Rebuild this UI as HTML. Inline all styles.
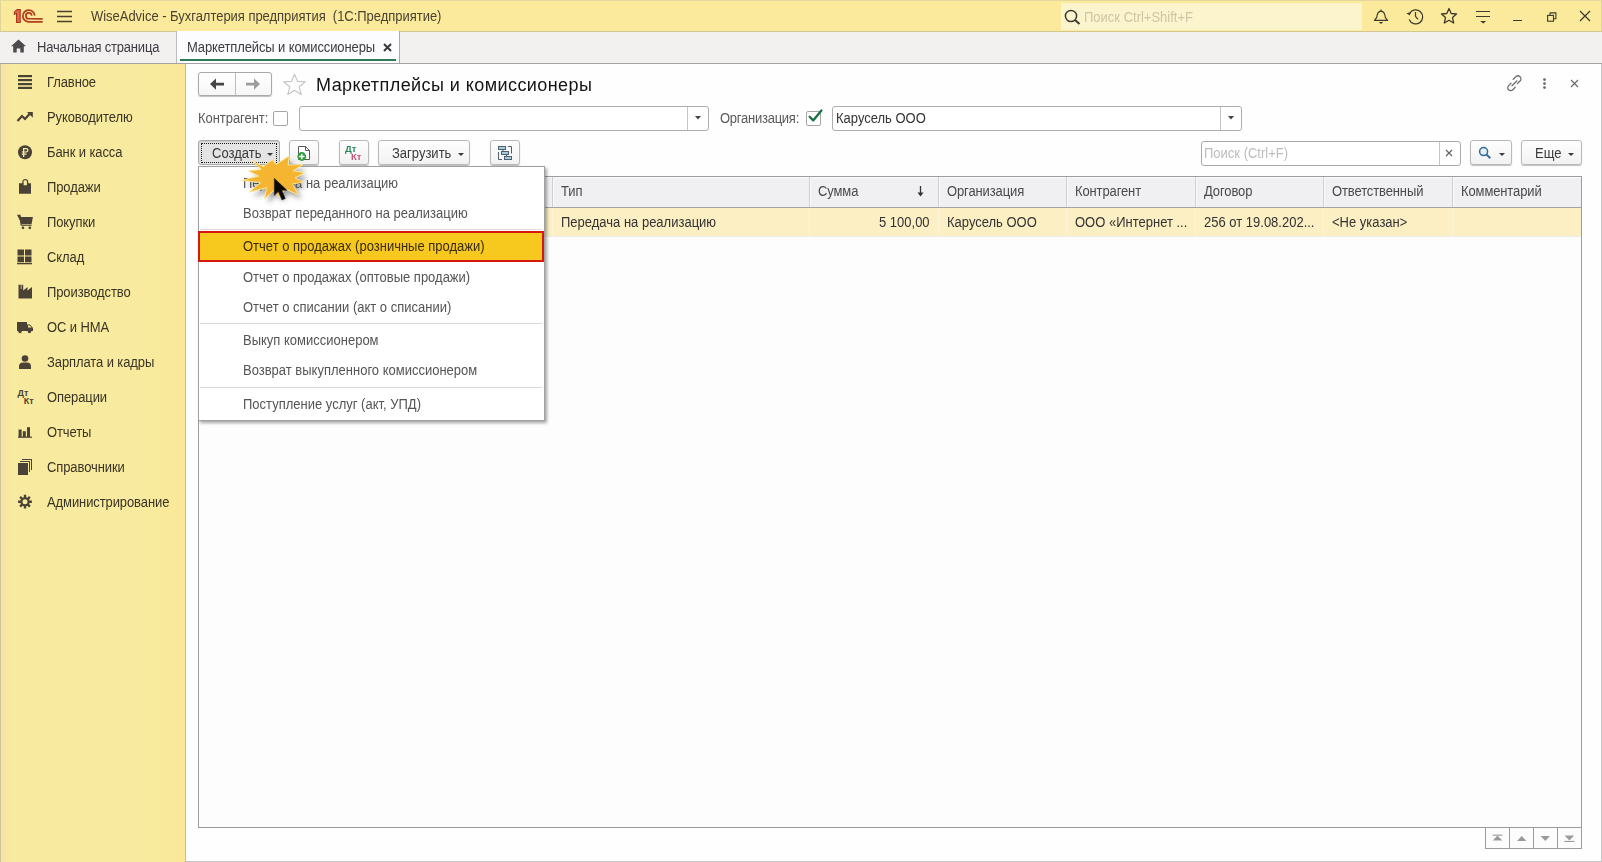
<!DOCTYPE html>
<html><head><meta charset="utf-8">
<style>
*{margin:0;padding:0;box-sizing:border-box}
html,body{width:1602px;height:862px;overflow:hidden;background:#fff}
body{position:relative;font-family:"Liberation Sans",sans-serif;font-size:13px;color:#404040}
.a{position:absolute}
.t{position:absolute;white-space:pre;line-height:16px;transform:scaleY(1.1);transform-origin:0 3.2px}
#titlebar{left:0;top:0;width:1602px;height:31px;background:#FBEA9B;border-top:1px solid #E4D89C;border-left:1px solid #E0D49A;border-right:1px solid #E0D49A}
#tabbar{left:0;top:31px;width:1602px;height:33px;background:#F3F0F0;border-top:1px solid #D3C892;border-bottom:1px solid #A4A4A4}
#sidebar{left:0;top:64px;width:186px;height:798px;background:linear-gradient(90deg,#F3E6A2 0px,#FAE4A6 5px,#F8EA9E 10px,#F8EB9F 140px,#FAE897 186px);border-right:1px solid #C9BD8C;border-left:1px solid #CFC596}
#content{left:186px;top:64px;width:1416px;height:798px;background:#FEFEFE;border-right:1px solid #C8C8C8;border-bottom:1px solid #C4C4C4}
.side{color:#3A3424;letter-spacing:-.1px;transform:scaleY(1.1);transform-origin:0 3.2px}
.btn{position:absolute;height:25px;border:1px solid #B9B9B9;border-radius:3px;background:linear-gradient(#FEFEFE,#F2F2F2);box-shadow:0 1px 1px rgba(0,0,0,.25)}
.inp{position:absolute;height:25px;border:1px solid #ADADAD;border-radius:3px;background:#fff}
.hd{position:absolute;top:177px;height:30px;background:#F0EFF2}
.sep{position:absolute;width:1px;background:#D6D6D6}
.mi{position:absolute;left:243px;color:#555555;letter-spacing:0}
</style></head><body>

<div id="titlebar" class="a"></div>
<div id="tabbar" class="a"></div>
<div id="sidebar" class="a"></div>
<div id="content" class="a"></div>

<!-- title bar -->
<svg class="a" style="left:0;top:0" width="50" height="30" viewBox="0 0 50 30">
 <path d="M14.4 11.9 L17.2 9.6 H20.2 V22.5 H16.6 V13.3 L14.4 14.3 Z" fill="#E46A48" stroke="#A8361A" stroke-width="1.1"/>
 <g fill="none" stroke="#B33C1D" stroke-width="1.75">
  <path d="M34.75 15.6 A5.95 5.95 0 1 0 28.8 21.95 H42.7"/>
  <path d="M31.7 15.6 A2.9 2.9 0 1 0 28.8 18.75 H42.7"/>
 </g>
</svg>
<svg class="a" style="left:57px;top:10px" width="15" height="13"><g stroke="#4A4030" stroke-width="1.3"><path d="M0 1.5H15M0 6.5H15M0 11.5H15"/></g></svg>
<div class="t" style="left:91px;top:8px;color:#4A4231;transform:scaleY(1.1);transform-origin:0 3.2px;letter-spacing:-.03px">WiseAdvice - Бухгалтерия предприятия  (1С:Предприятие)</div>

<div class="a" style="left:1061px;top:3px;width:301px;height:27px;background:#FCF4CD"></div>
<svg class="a" style="left:1064px;top:9px" width="17" height="16"><circle cx="7" cy="7" r="5.6" fill="none" stroke="#3D3A30" stroke-width="1.5"/><path d="M11 11 L15.5 15" stroke="#3D3A30" stroke-width="2"/></svg>
<div class="t" style="left:1084px;top:9px;color:#CDC5A6">Поиск Ctrl+Shift+F</div>

<!-- top right icons -->
<svg class="a" style="left:1372px;top:7px" width="18" height="19" viewBox="0 0 18 19" fill="none" stroke="#3F3A2E" stroke-width="1.2" stroke-linejoin="round">
 <path d="M2.5 13.4 L4.6 10.6 Q5.4 4.4 9 4.2 Q12.6 4.4 13.4 10.6 L15.6 13.4 Z"/><path d="M9 2.6 V4"/><path d="M6.8 15 H11.2 L9 16.9 Z" fill="#3F3A2E" stroke="none"/>
</svg>
<svg class="a" style="left:1404px;top:5px" width="22" height="22" viewBox="0 0 22 22" fill="none" stroke="#3F3A2E" stroke-width="1.25">
 <path d="M5.6 8.4 A7 7 0 1 1 5.2 14.6"/><path d="M2.4 8.2 L6.8 7.2 L5.8 10.6 Z" fill="#3F3A2E" stroke="none"/><path d="M11.5 7 V11.3 L14 14.4"/>
</svg>
<svg class="a" style="left:1440px;top:7px" width="18" height="18" viewBox="0 0 18 18" fill="none" stroke="#3F3A2E" stroke-width="1.3" stroke-linejoin="round">
 <path d="M9 1.5 L11.2 6.5 L16.5 7 L12.5 10.6 L13.7 16 L9 13.2 L4.3 16 L5.5 10.6 L1.5 7 L6.8 6.5 Z"/>
</svg>
<svg class="a" style="left:1475px;top:9px" width="16" height="16" viewBox="0 0 16 16" fill="none" stroke="#3F3A2E" stroke-width="1.2">
 <path d="M1 2.5H15M1 7.5H15"/><path d="M5.2 12 h6 l-3 2.6z" fill="#3F3A2E" stroke="none"/>
</svg>
<div class="a" style="left:1513px;top:20px;width:9px;height:1px;background:#3F3A2E"></div>
<svg class="a" style="left:1546px;top:11px" width="11" height="11" viewBox="0 0 11 11" fill="none" stroke="#3F3A2E" stroke-width="1.1">
 <rect x="1.6" y="4.4" width="5.9" height="5.8"/><path d="M4.1 4.4 V1.9 H9.9 V7.7 H7.5"/>
</svg>
<svg class="a" style="left:1579px;top:10px" width="12" height="12" viewBox="0 0 12 12" stroke="#3F3A2E" stroke-width="1.3"><path d="M1 1L11 11M11 1L1 11"/></svg>

<!-- tab bar -->
<svg class="a" style="left:11px;top:39px" width="15" height="14" viewBox="0 0 15 14"><path d="M7.5 0.5 L15 7.3 L12.8 7.3 L12.8 13.5 L9.3 13.5 L9.3 9.5 L5.7 9.5 L5.7 13.5 L2.2 13.5 L2.2 7.3 L0 7.3 Z" fill="#4B4B4F"/></svg>
<div class="t" style="left:37px;top:39px;color:#3C3C40;letter-spacing:-.2px">Начальная страница</div>
<div class="a" style="left:176px;top:31px;width:1px;height:32px;background:#BDBDBD"></div>
<div class="a" style="left:177px;top:31px;width:222px;height:32px;background:#FCFBFD"></div>
<div class="a" style="left:399px;top:31px;width:1px;height:32px;background:#A8A8A8"></div>
<div class="t" style="left:187px;top:39px;color:#3C3C40;letter-spacing:-.12px">Маркетплейсы и комиссионеры</div>
<svg class="a" style="left:383px;top:43px" width="9" height="9"><path d="M1 1L8 8M8 1L1 8" stroke="#3A3A3A" stroke-width="2"/></svg>
<div class="a" style="left:180px;top:59px;width:216px;height:2px;background:#2F7A56"></div>

<!-- sidebar -->
<svg class="a" style="left:0;top:64px" width="40" height="460" viewBox="0 64 40 460">
 <g fill="#4A4236">
  <!-- main: 4 bars -->
  <rect x="18" y="75" width="14" height="2.2"/><rect x="18" y="79" width="14" height="2.2"/><rect x="18" y="83" width="14" height="2.2"/><rect x="18" y="86.8" width="14" height="2.2"/>
  <!-- ruble -->
  <circle cx="25" cy="152.2" r="7"/>
  <!-- bag -->
  <path d="M19 183.2 H23.6 V185.2 H26.9 V183.2 H31 V193.8 H19 Z"/>
  <!-- cart -->
  <path d="M17 214.8 H20.4 L20.6 216.9 H32.9 L31.6 224.1 H21.6 Z"/>
  <rect x="21.2" y="224.6" width="10.4" height="1.2"/>
  <path d="M20 215.5 L21.2 225.2" stroke="#4A4236" stroke-width="1.3"/>
  <circle cx="23" cy="227.8" r="1.35"/><circle cx="29.8" cy="227.8" r="1.35"/>
  <!-- sklad grid -->
  <rect x="17.5" y="249.5" width="6.5" height="6"/><rect x="25" y="249.5" width="6.5" height="6"/>
  <rect x="17.5" y="256.5" width="6.5" height="5.8"/><rect x="25" y="256.5" width="6.5" height="5.8"/>
  <rect x="17" y="263" width="15" height="1.3"/>
  <!-- factory -->
  <path d="M18.5 298.5 V284.8 H20.8 V289 L21.5 289 V284.8 H23.2 V290.5 L27.5 287 V290.5 L32 287 V298.5 Z"/>
  <!-- truck -->
  <path d="M17 322 H27 V324.5 H30 L33 328 V331 H17 Z"/>
  <circle cx="20" cy="331.5" r="1.7"/><circle cx="29.5" cy="331.5" r="1.7"/>
  <path d="M28 325.4 H29.8 L31.6 327.6 H28 Z" fill="#F8EA9E"/>
  <!-- person -->
  <circle cx="25" cy="358.5" r="3.3"/>
  <path d="M19 369 V366.5 Q19 362.6 23 362.6 H27 Q31 362.6 31 366.5 V369 Z"/>
  <!-- chart -->
  <rect x="18.6" y="429.5" width="3" height="7.5"/><rect x="22.8" y="431.2" width="3" height="5.8"/><rect x="27" y="427.2" width="3" height="9.8"/>
  <rect x="18" y="436.6" width="14" height="1.2"/>
  <!-- spravochniki -->
  <rect x="18" y="463" width="10" height="12"/>
  <path d="M20 461 H30 V472 H29 V462 H20 Z"/><path d="M22 459 H32 V470 H31 V460 H22 Z"/>
 </g>
 <g fill="#F7E9A2">
  <path d="M23 148 H26.2 a2.3 2.3 0 0 1 0 4.6 H24.3 V153.6 H26.5 V154.8 H24.3 V157 H23 V154.8 H21.8 V153.6 H23 V152.6 H21.8 V151.4 H23 Z M24.3 149.2 V151.4 H26.1 a1.1 1.1 0 0 0 0 -2.2 Z"/>
 </g>
 <path d="M17.5 121 L22 116 L25 119 L30 113.5" fill="none" stroke="#4A4236" stroke-width="2.2"/>
 <path d="M27 112 H32.8 V117.8 Z" fill="#4A4236"/>
 <path d="M22.9 184 V181.6 A2.35 2.1 0 0 1 27.6 181.6 V184" fill="none" stroke="#4A4236" stroke-width="1.25"/>
 <text x="17.6" y="396.4" font-family="Liberation Sans" font-weight="bold" font-size="9" fill="#4A4236">Дт</text>
 <text x="23.8" y="404.2" font-family="Liberation Sans" font-weight="bold" font-size="9" fill="#4A4236">Кт</text>
 <path fill="#4A4236" fill-rule="evenodd" d="M29.54 500.49 L31.90 500.52 L31.90 502.88 L29.54 502.91 L29.07 504.06 L30.72 505.74 L29.04 507.42 L27.36 505.77 L26.21 506.24 L26.18 508.60 L23.82 508.60 L23.79 506.24 L22.64 505.77 L20.96 507.42 L19.28 505.74 L20.93 504.06 L20.46 502.91 L18.10 502.88 L18.10 500.52 L20.46 500.49 L20.93 499.34 L19.28 497.66 L20.96 495.98 L22.64 497.63 L23.79 497.16 L23.82 494.80 L26.18 494.80 L26.21 497.16 L27.36 497.63 L29.04 495.98 L30.72 497.66 L29.07 499.34 Z M27.5 501.7 A2.5 2.5 0 1 0 22.5 501.7 A2.5 2.5 0 1 0 27.5 501.7 Z"/>
</svg>
<div class="t side" style="left:47px;top:74px">Главное</div>
<div class="t side" style="left:47px;top:109px">Руководителю</div>
<div class="t side" style="left:47px;top:144px">Банк и касса</div>
<div class="t side" style="left:47px;top:179px">Продажи</div>
<div class="t side" style="left:47px;top:214px">Покупки</div>
<div class="t side" style="left:47px;top:249px">Склад</div>
<div class="t side" style="left:47px;top:284px">Производство</div>
<div class="t side" style="left:47px;top:319px">ОС и НМА</div>
<div class="t side" style="left:47px;top:354px">Зарплата и кадры</div>
<div class="t side" style="left:47px;top:389px">Операции</div>
<div class="t side" style="left:47px;top:424px">Отчеты</div>
<div class="t side" style="left:47px;top:459px">Справочники</div>
<div class="t side" style="left:47px;top:494px">Администрирование</div>

<!-- header of form -->
<div class="btn" style="left:198px;top:72px;width:74px;height:24px;border-color:#A8A8A8;background:linear-gradient(#FFFFFF,#F6F6F6)"></div>
<div class="a" style="left:235px;top:73px;width:1px;height:22px;background:#BDBDBD"></div>
<svg class="a" style="left:209px;top:78px" width="16" height="13" viewBox="0 0 16 13"><path d="M1 6 L7 0.5 V4.8 H15 V7.4 H7 V11.7 Z" fill="#454545"/></svg>
<svg class="a" style="left:245px;top:78px" width="16" height="13" viewBox="0 0 16 13"><path d="M15 6 L9 0.5 V4.8 H1 V7.4 H9 V11.7 Z" fill="#9C9C9C"/></svg>
<svg class="a" style="left:282px;top:73px" width="25" height="23" viewBox="0 0 25 23"><path d="M12.5 1.2 L15.5 8.4 L23.3 8.8 L17.2 13.8 L19.2 21.5 L12.5 17.2 L5.8 21.5 L7.8 13.8 L1.7 8.8 L9.5 8.4 Z" fill="none" stroke="#C4C4C4" stroke-width="1.1" stroke-linejoin="round"/></svg>
<div class="t" style="left:316px;top:74px;transform:none;will-change:transform;font-size:18px;line-height:22px;color:#141414;letter-spacing:.43px">Маркетплейсы и комиссионеры</div>

<svg class="a" style="left:1506px;top:75px" width="17" height="17" viewBox="0 0 17 17" fill="none" stroke="#6E6E6E" stroke-width="1.3" stroke-linecap="round">
 <path d="M7.2 4.2 L9.8 1.8 a2.8 2.8 0 0 1 4.2 4.2 L11.5 8.5"/><path d="M9.2 12.3 L6.8 14.8 a2.8 2.8 0 0 1 -4.2 -4.2 L5 8.2"/><path d="M6 10.8 L10.8 6"/>
</svg>
<svg class="a" style="left:1542px;top:78px" width="5" height="12"><circle cx="2.5" cy="1.6" r="1.4" fill="#6A6A6A"/><circle cx="2.5" cy="5.6" r="1.4" fill="#6A6A6A"/><circle cx="2.5" cy="9.6" r="1.4" fill="#6A6A6A"/></svg>
<svg class="a" style="left:1570px;top:79px" width="9" height="9"><path d="M1 1L8 8M8 1L1 8" stroke="#6A6A6A" stroke-width="1.2"/></svg>

<!-- filter row -->
<div class="t" style="left:198px;top:110px;color:#5A5A5A;letter-spacing:-.05px">Контрагент:</div>
<div class="a" style="left:273px;top:111px;width:15px;height:15px;border:1px solid #A5A5A5;border-radius:2px;background:#fff"></div>
<div class="inp" style="left:299px;top:106px;width:410px;height:25px"></div>
<div class="a" style="left:687px;top:107px;width:1px;height:23px;background:#C4C4C4"></div>
<svg class="a" style="left:695px;top:116px" width="6" height="4"><path d="M0 0H6L3 3.5Z" fill="#444"/></svg>
<div class="t" style="left:720px;top:110px;color:#5A5A5A;letter-spacing:-.25px">Организация:</div>
<div class="a" style="left:806px;top:111px;width:15px;height:15px;border:1px solid #A5A5A5;border-radius:2px;background:#fff"></div>
<svg class="a" style="left:806px;top:106px" width="18" height="18" viewBox="0 0 18 18"><path d="M3.6 10.8 L7.2 14.4 L15.4 4.4" fill="none" stroke="#1A7048" stroke-width="2.3" stroke-linecap="round" stroke-linejoin="round"/></svg>
<div class="inp" style="left:832px;top:106px;width:410px;height:25px"></div>
<div class="a" style="left:1220px;top:107px;width:1px;height:23px;background:#C4C4C4"></div>
<svg class="a" style="left:1228px;top:116px" width="6" height="4"><path d="M0 0H6L3 3.5Z" fill="#444"/></svg>
<div class="t" style="left:836px;top:110px;color:#333">Карусель ООО</div>

<!-- toolbar -->
<div class="a" style="left:198px;top:140px;width:82px;height:25px;border:1px solid #A9A9A9;border-radius:3px;background:#E4E4E4;box-shadow:inset 0 1px 1px rgba(0,0,0,.12)"></div>
<div class="a" style="left:201px;top:143px;width:76px;height:20px;border:1px dotted #1A1A1A"></div>
<div class="t" style="left:212px;top:145px;color:#3A3A3A">Создать</div>
<svg class="a" style="left:267px;top:153px" width="6" height="4"><path d="M0 0H6L3 3Z" fill="#3A3A3A"/></svg>

<div class="btn" style="left:289px;top:140px;width:30px"></div>
<svg class="a" style="left:295px;top:145px" width="18" height="18" viewBox="0 0 18 18">
 <path d="M3.5 1.5 H10.5 L14.5 5.5 V14.5 H3.5 Z" fill="#fff" stroke="#5A5A5A" stroke-width="1" stroke-linejoin="round"/><path d="M10.5 1.5 V5.5 H14.5" fill="none" stroke="#5A5A5A" stroke-width="1"/>
 <circle cx="6.8" cy="11.5" r="4.4" fill="#2E9A3A"/><path d="M6.8 8.8 V14.2 M4.1 11.5 H9.5" stroke="#fff" stroke-width="1.4"/>
</svg>
<div class="btn" style="left:339px;top:140px;width:30px"></div>
<div class="t" style="left:345px;top:143px;font-size:9.5px;line-height:11px;font-weight:bold;color:#2A8A5E;transform:none;will-change:transform">Дт</div>
<div class="t" style="left:351px;top:151px;font-size:9.5px;line-height:11px;font-weight:bold;color:#C8557C;transform:none;will-change:transform">Кт</div>
<div class="btn" style="left:378px;top:140px;width:92px"></div>
<div class="t" style="left:392px;top:145px;color:#3A3A3A">Загрузить</div>
<svg class="a" style="left:458px;top:153px" width="6" height="4"><path d="M0 0H6L3 3Z" fill="#3A3A3A"/></svg>
<div class="btn" style="left:490px;top:140px;width:30px"></div>
<svg class="a" style="left:497px;top:145px" width="16" height="16" viewBox="0 0 16 16">
 <g fill="#A8CBE0" stroke="#4D6070" stroke-width="1">
  <rect x="1.5" y="1.5" width="7" height="3"/><rect x="4.5" y="6.5" width="7" height="3"/><rect x="7.5" y="11.5" width="7" height="3"/>
 </g>
 <path d="M11 1.5 H14.5 V8.5 M1.5 7 V14.5 H5 M6 4.5 V6.5 M9.5 9.5 V11.5" fill="none" stroke="#4D6070" stroke-width="1"/>
</svg>

<div class="inp" style="left:1201px;top:141px;width:260px;height:25px;border-color:#ABABAB"></div>
<div class="a" style="left:1439px;top:142px;width:1px;height:23px;background:#C4C4C4"></div>
<div class="t" style="left:1204px;top:145px;color:#BDBDBD">Поиск (Ctrl+F)</div>
<svg class="a" style="left:1445px;top:149px" width="8" height="8"><path d="M1 1L7 7M7 1L1 7" stroke="#606060" stroke-width="1.1"/></svg>
<div class="btn" style="left:1470px;top:140px;width:42px"></div>
<svg class="a" style="left:1478px;top:146px" width="14" height="14" viewBox="0 0 14 14"><circle cx="5.6" cy="5.6" r="4" fill="#E4F0F8" stroke="#35689A" stroke-width="1.5"/><path d="M8.6 8.6 L12.3 12.3" stroke="#35689A" stroke-width="2"/></svg>
<svg class="a" style="left:1499px;top:153px" width="6" height="4"><path d="M0 0H6L3 3Z" fill="#3A3A3A"/></svg>
<div class="btn" style="left:1521px;top:140px;width:61px"></div>
<div class="t" style="left:1535px;top:145px;color:#3A3A3A">Еще</div>
<svg class="a" style="left:1568px;top:153px" width="6" height="4"><path d="M0 0H6L3 3Z" fill="#3A3A3A"/></svg>

<!-- table -->
<div class="a" style="left:198px;top:176px;width:1384px;height:652px;border:1px solid #9C9C9C;background:#FDFDFD"></div>
<div class="a" style="left:199px;top:177px;width:1382px;height:30px;background:#F0EFF2;border-top:1px solid #FAFAFB;border-left:1px solid #FAFAFB"></div>
<div class="a" style="left:199px;top:207px;width:1382px;height:1px;background:#A3A3A3"></div>
<div class="a" style="left:199px;top:208px;width:1382px;height:28px;background:#FBEFC3"></div>
<div class="a" style="left:199px;top:236px;width:1382px;height:1px;background:#ECEBE6"></div>
<div class="sep" style="left:552px;top:177px;height:30px;background:#CFCFCF"></div>
<div class="sep" style="left:809px;top:177px;height:30px;background:#CFCFCF"></div>
<div class="sep" style="left:938px;top:177px;height:30px;background:#CFCFCF"></div>
<div class="sep" style="left:1066px;top:177px;height:30px;background:#CFCFCF"></div>
<div class="sep" style="left:1195px;top:177px;height:30px;background:#CFCFCF"></div>
<div class="sep" style="left:1323px;top:177px;height:30px;background:#CFCFCF"></div>
<div class="sep" style="left:1452px;top:177px;height:30px;background:#CFCFCF"></div>
<div class="sep" style="left:553px;top:177px;height:30px;background:#FAFAFB"></div>
<div class="sep" style="left:810px;top:177px;height:30px;background:#FAFAFB"></div>
<div class="sep" style="left:939px;top:177px;height:30px;background:#FAFAFB"></div>
<div class="sep" style="left:1067px;top:177px;height:30px;background:#FAFAFB"></div>
<div class="sep" style="left:1196px;top:177px;height:30px;background:#FAFAFB"></div>
<div class="sep" style="left:1324px;top:177px;height:30px;background:#FAFAFB"></div>
<div class="sep" style="left:1453px;top:177px;height:30px;background:#FAFAFB"></div>
<div class="sep" style="left:552px;top:208px;height:28px;background:#FCF4D8"></div>
<div class="sep" style="left:809px;top:208px;height:28px;background:#FCF4D8"></div>
<div class="sep" style="left:938px;top:208px;height:28px;background:#FCF4D8"></div>
<div class="sep" style="left:1066px;top:208px;height:28px;background:#FCF4D8"></div>
<div class="sep" style="left:1195px;top:208px;height:28px;background:#FCF4D8"></div>
<div class="sep" style="left:1323px;top:208px;height:28px;background:#FCF4D8"></div>
<div class="sep" style="left:1452px;top:208px;height:28px;background:#FCF4D8"></div>

<div class="t" style="left:561px;top:183px;color:#4A4A4A;letter-spacing:-.12px">Тип</div>
<div class="t" style="left:818px;top:183px;color:#4A4A4A;letter-spacing:-.12px">Сумма</div>
<svg class="a" style="left:917px;top:186px" width="7" height="11" viewBox="0 0 7 11"><path d="M3.5 0 V9" stroke="#333" stroke-width="1.3"/><path d="M0.5 6.5 L3.5 10.5 L6.5 6.5Z" fill="#333"/></svg>
<div class="t" style="left:947px;top:183px;color:#4A4A4A;letter-spacing:-.12px">Организация</div>
<div class="t" style="left:1075px;top:183px;color:#4A4A4A;letter-spacing:-.12px">Контрагент</div>
<div class="t" style="left:1204px;top:183px;color:#4A4A4A;letter-spacing:-.12px">Договор</div>
<div class="t" style="left:1332px;top:183px;color:#4A4A4A;letter-spacing:-.12px">Ответственный</div>
<div class="t" style="left:1461px;top:183px;color:#4A4A4A;letter-spacing:-.12px">Комментарий</div>

<div class="t" style="left:561px;top:214px;color:#333">Передача на реализацию</div>
<div class="t" style="left:879px;top:214px;color:#333">5 100,00</div>
<div class="t" style="left:947px;top:214px;color:#333">Карусель ООО</div>
<div class="t" style="left:1075px;top:214px;color:#333">ООО «Интернет ...</div>
<div class="t" style="left:1204px;top:214px;color:#333">256 от 19.08.202...</div>
<div class="t" style="left:1332px;top:214px;color:#333">&lt;Не указан&gt;</div>

<!-- bottom nav -->
<div class="a" style="left:1485px;top:827px;width:97px;height:22px;border:1px solid #9C9C9C;background:#FCFCFD"></div>
<div class="sep" style="left:1509px;top:827px;height:22px;background:#9C9C9C"></div>
<div class="sep" style="left:1533px;top:827px;height:22px;background:#9C9C9C"></div>
<div class="sep" style="left:1557px;top:827px;height:22px;background:#9C9C9C"></div>
<svg class="a" style="left:1485px;top:827px" width="97" height="22" viewBox="0 0 97 22" fill="#9A9A9A">
 <rect x="7.5" y="7.6" width="10" height="1.1"/><path d="M7.7 13.6 L12.5 8.6 L17.3 13.6Z"/>
 <path d="M32 14 L36.7 9 L41.4 14Z"/>
 <path d="M55.6 9 L60.3 14 L65 9Z"/>
 <path d="M79.6 8.6 L84.4 13.6 L89.2 8.6Z"/><rect x="79.4" y="13.9" width="10" height="1.1"/>
</svg>

<!-- dropdown menu -->
<div class="a" style="left:198px;top:166px;width:347px;height:255px;background:#FFFFFF;border:1px solid #A0A0A0;box-shadow:2px 2px 3px rgba(0,0,0,.35)"></div>
<div class="a" style="left:200px;top:229px;width:342px;height:1px;background:#E2DADA"></div>
<div class="a" style="left:200px;top:323px;width:342px;height:1px;background:#D9D9D9"></div>
<div class="a" style="left:200px;top:387px;width:342px;height:1px;background:#D9D9D9"></div>
<div class="a" style="left:198px;top:231px;width:346px;height:31px;background:#F7C81E;border:2.6px solid #D5170F"></div>
<div class="t mi" style="top:175px">Передача на реализацию</div>
<div class="t mi" style="top:205px">Возврат переданного на реализацию</div>
<div class="t mi" style="top:238px;color:#3B2C0A">Отчет о продажах (розничные продажи)</div>
<div class="t mi" style="top:269px">Отчет о продажах (оптовые продажи)</div>
<div class="t mi" style="top:299px">Отчет о списании (акт о списании)</div>
<div class="t mi" style="top:332px">Выкуп комиссионером</div>
<div class="t mi" style="top:362px">Возврат выкупленного комиссионером</div>
<div class="t mi" style="top:396px">Поступление услуг (акт, УПД)</div>

<!-- burst + cursor -->
<svg class="a" style="left:215px;top:140px;overflow:visible" width="110" height="80" viewBox="215 140 110 80">
 <defs><filter id="sh" x="-40%" y="-40%" width="180%" height="180%"><feGaussianBlur stdDeviation="2.5"/></filter></defs>
 <path d="M251.9 160.7 L263.3 166.6 L272.4 159.7 L276 164.6 L289.3 155.8 L288 165 L302.9 164.6 L293.2 170.8 L304.9 172.7 L295.1 177.9 L303.6 182.5 L292.5 183.8 L298.4 194.8 L285.4 189 L279 197 L274 190.3 L264.6 198.7 L266.5 187.7 L249 192.2 L260.7 182.5 L241.2 180.5 L258.7 176 L248.3 170.8 L261.3 169.5 Z" transform="translate(3.5 4.5)" fill="#444" opacity=".5" filter="url(#sh)"/>
 <path d="M251.9 160.7 L263.3 166.6 L272.4 159.7 L276 164.6 L289.3 155.8 L288 165 L302.9 164.6 L293.2 170.8 L304.9 172.7 L295.1 177.9 L303.6 182.5 L292.5 183.8 L298.4 194.8 L285.4 189 L279 197 L274 190.3 L264.6 198.7 L266.5 187.7 L249 192.2 L260.7 182.5 L241.2 180.5 L258.7 176 L248.3 170.8 L261.3 169.5 Z" fill="#F6B530" stroke="#FDEB9E" stroke-width="0.9" stroke-linejoin="round"/>
 <path d="M274.3 178.3 V195.5 L278.3 191.5 L282 200 L285.3 198.5 L281.8 190.3 L287 190.3 Z" fill="#0A0A0A" stroke="#222" stroke-width=".5"/>
</svg>

</body></html>
